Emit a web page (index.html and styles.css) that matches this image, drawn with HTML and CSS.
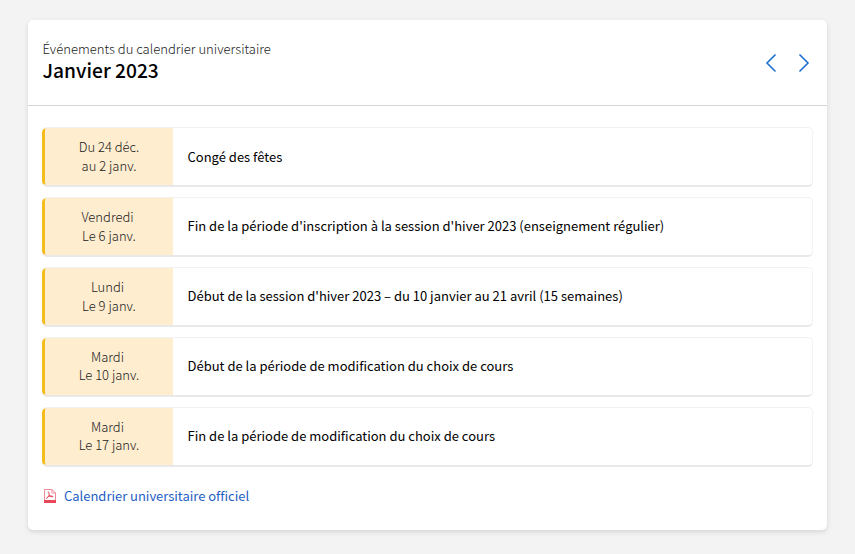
FILE: index.html
```html
<!DOCTYPE html>
<html lang="fr">
<head>
<meta charset="utf-8">
<title>Calendrier universitaire</title>
<link rel="stylesheet" href="styles.css">
</head>
<body>
<section class="card">
  <header class="card-header">
    <div class="heading">
      <p class="kicker">Événements du calendrier universitaire</p>
      <h1 class="month">Janvier 2023</h1>
    </div>
    <nav class="pager">
      <a class="arrow" aria-label="Mois précédent"><svg width="12" height="20" viewBox="0 0 12 20"><path d="M10.500 1.500 2 10l8.500 8.500"/></svg></a>
      <a class="arrow" aria-label="Mois suivant"><svg width="12" height="20" viewBox="0 0 12 20"><path d="M1.500 1.500 10 10l-8.500 8.500"/></svg></a>
    </nav>
  </header>
  <div class="card-body">
    <ul class="events">
      <li class="event"><div class="date"><span>Du 24 déc.</span><span>au 2 janv.</span></div><div class="title">Congé des fêtes</div></li>
      <li class="event"><div class="date"><span class="weekday">Vendredi</span><span>Le 6 janv.</span></div><div class="title">Fin de la période d'inscription à la session d'hiver 2023 (enseignement régulier)</div></li>
      <li class="event"><div class="date"><span class="weekday">Lundi</span><span>Le 9 janv.</span></div><div class="title">Début de la session d'hiver 2023 – du 10 janvier au 21 avril (15 semaines)</div></li>
      <li class="event compact"><div class="date"><span class="weekday">Mardi</span><span>Le 10 janv.</span></div><div class="title">Début de la période de modification du choix de cours</div></li>
      <li class="event compact"><div class="date"><span class="weekday">Mardi</span><span>Le 17 janv.</span></div><div class="title">Fin de la période de modification du choix de cours</div></li>
    </ul>
    <a class="official">
      <svg class="pdf" width="12" height="14" viewBox="0 0 12 14"><path class="page" d="M.5 11V.5h7.500l3.500 3.500v7M8 .5V4h3.500"/><path class="swirl" d="M3.800 2.800C5.400 2.600 4.800 5 5.200 6c.8 1.300 2.300 2 4 1.600M5.200 6C4.800 7.700 3.500 9 2 9.500M3.500 7.800c2-.7 3.500-1 5.500-.4"/><path class="band" d="M0 11h12v3H0z"/></svg>
      <span class="official-label">Calendrier universitaire officiel</span>
    </a>
  </div>
</section>
</body>
</html>
```
FILE: styles.css
```css
* {
  box-sizing: border-box;
}

body {
  margin: 0;
  padding: 20px 28px 24px;
  background: #f3f3f3;
  color: #000;
  font-family: "Noto Sans CJK SC", "Open Sans", sans-serif;
  font-size: 13px;
}

.card {
  height: 510px;
  background: #fff;
  border-radius: 5px;
  box-shadow: 0 2px 5px rgba(0, 0, 0, .12);
}

.card-header {
  display: flex;
  justify-content: space-between;
  height: 86px;
  padding: 19px 17px 0 14.500px;
  border-bottom: 1px solid #d4d6d6;
}

.kicker,
.month {
  margin: 0;
  white-space: nowrap;
}

.kicker {
  color: #222;
  font-size: 13.050px;
  font-weight: 300;
  line-height: 20px;
}

.month {
  font-size: 19.200px;
  font-weight: 500;
  line-height: 22px;
}

.pager {
  display: flex;
  gap: 21px;
  padding-top: 14px;
}

.arrow {
  width: 12px;
  height: 20px;
}

.arrow svg {
  display: block;
  fill: none;
  stroke: #1d6fce;
  stroke-width: 1.6;
}

.card-body {
  padding: 21px 14px 0;
}

.events {
  display: grid;
  gap: 10px;
  margin: 0;
  padding: 0;
  list-style: none;
}

.event {
  display: flex;
  height: 60px;
  border: 1px solid #f2f2f2;
  border-bottom: 2px solid #e9e9e9;
  border-left: 0;
  border-radius: 5px;
  overflow: hidden;
}

.date {
  width: 131px;
  padding: 9px 0 0;
  border-left: 3px solid #f3bd1d;
  border-radius: 4px 0 0 4px;
  background: #ffedd0;
  color: #222;
  font-weight: 300;
  line-height: 19px;
  text-align: center;
}

.date span {
  display: block;
}

.date .weekday {
  padding-right: 3px;
}

.compact .weekday {
  height: 18px;
}

.title {
  padding-left: 14.500px;
  line-height: 57px;
  white-space: nowrap;
}

.event + .event .title {
  line-height: 55px;
}

.official {
  display: flex;
  align-items: center;
  gap: 8px;
  height: 20px;
  margin: 19px 0 0 2px;
  color: #1d5fc4;
}

.official-label {
  padding-bottom: 2px;
  letter-spacing: -.02px;
}

.pdf {
  fill: none;
  stroke: #e8475a;
  stroke-width: 1;
}

.pdf .page {
  stroke: #ef8b97;
}

.pdf .band {
  fill: #e8475a;
  stroke: none;
}
```
